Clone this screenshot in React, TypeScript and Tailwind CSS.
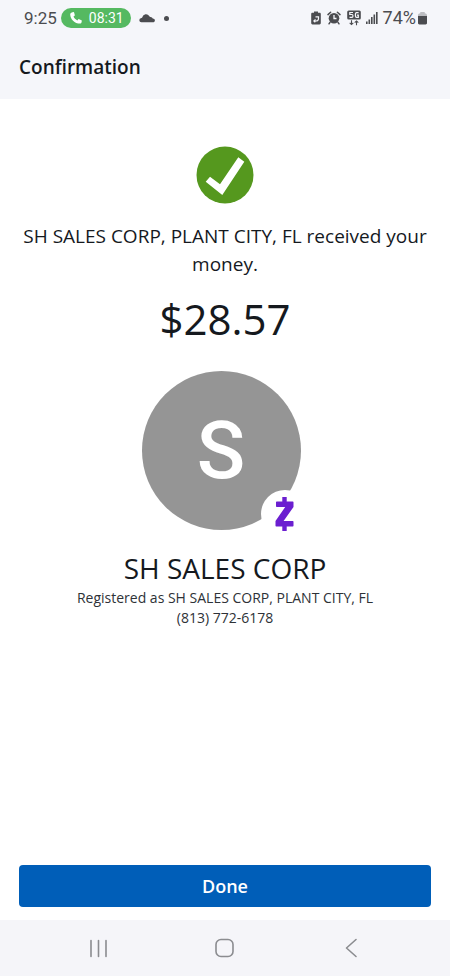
import type { ReactNode } from "react";

const payment = {
  name: "SH SALES CORP",
  location: "PLANT CITY, FL",
  amount: "$28.57",
  phone: "(813) 772-6178",
};

const recipient = `${payment.name}, ${payment.location}`;

function StatusBar() {
  return (
    <div className="flex h-9 items-center justify-between pl-6 pr-[23px] font-['Roboto',sans-serif] text-[#4b4c50]">
      <div className="flex items-center">
        <span className="text-[17px] leading-5">9:25</span>
        {/* Ongoing call */}
        <div className="ml-1 flex h-5 w-[70px] items-center gap-[7px] rounded-full bg-[#55b961] pl-[9px] text-white">
          <svg className="h-3 w-3" viewBox="0 0 12 12" fill="currentColor">
            <path d="M1.900.4 3.200.1c.5-.1.8.1.9.5l.7 2.300c.1.4 0 .7-.3.9l-1 .8c.7 1.700 2 3 3.800 3.800l.9-1c.3-.3.6-.4 1-.2l2.200 1c.4.2.5.5.4.9l-.4 1.700c-.1.5-.5.8-1 .8C4.700 11.700.2 7.200.2 2.200c0-.9.7-1.600 1.700-1.800Z" />
          </svg>
          <span className="text-sm leading-5">08:31</span>
        </div>
        <svg className="ml-2 h-[10px] w-4" viewBox="0 0 16 10" fill="currentColor">
          <path d="M2.600 9.300A2.200 2.200 0 0 1 2.400 4.900c.6-.1.8-.3 1-.9A3.700 3.700 0 0 1 10.200 3c.3.600.7.8 1.300.9 1.200.2 1.900.8 2.200 1.700 1.400.2 2.200.8 2.200 1.900 0 1.100-.8 1.800-2 1.800Z" />
        </svg>
        <span className="ml-[9px] h-[5px] w-[5px] rounded-full bg-[#4b4c50]" />
      </div>

      <div className="flex items-center">
        <svg className="h-[14px] w-[10px]" viewBox="0 0 10 14" fill="currentColor">
          <path d="M3 .5h4v1.300h1.500c.8 0 1.300.5 1.300 1.300v9c0 .8-.5 1.300-1.300 1.300h-7C.7 13.400.2 12.900.2 12.100v-9c0-.8.5-1.300 1.300-1.300H3Z" />
          <path d="M4.500 5.800h3v1.700c0 1.700-1 2.500-2.500 2.500H2.800M4.500 8.400 2.900 10l1.400 1.200" stroke="#f5f6fa" strokeWidth="1.200" fill="none" />
        </svg>
        <svg className="ml-[6px] h-[14px] w-[14px]" viewBox="0 0 14 14" fill="currentColor">
          <circle cx="7" cy="7.200" r="5.300" />
          <path d="m1 3.600 2.600-2.300M13 3.600l-2.600-2.300M3 11.300l-1 1.500M11 11.300l1 1.500" stroke="currentColor" strokeWidth="1.500" strokeLinecap="round" />
          <path d="M7 4v3.500h2.500" stroke="#f5f6fa" strokeWidth="1.300" fill="none" />
        </svg>
        <svg className="ml-[6px] h-4 w-[14px]" viewBox="0 0 14 16" fill="currentColor">
          <rect x=".2" y=".5" width="13.600" height="9" rx="1.500" />
          <path d="M6 2.500H2.800v2H5c1.300 0 1.300 2.800 0 2.800H2.500M11.600 2.600H9.500c-1.500 0-1.500 4.700 0 4.700h1.800V5.200H9.900" stroke="#f5f6fa" strokeWidth="1.200" fill="none" />
          <path d="M4.500 10.300v4.200M2.700 12.900l1.800 1.700 1.800-1.700M9.500 15.200V11M7.700 12.600l1.800-1.700 1.800 1.700" stroke="currentColor" strokeWidth="1.100" fill="none" />
        </svg>
        <svg className="ml-[5px] h-3 w-3" viewBox="0 0 12 12" fill="currentColor">
          <rect x="0" y="9.500" width="1.600" height="2.500" />
          <rect x="2.500" y="7.500" width="1.600" height="4.500" />
          <rect x="5" y="5" width="1.600" height="7" />
          <rect x="7.500" y="2.500" width="1.600" height="9.500" />
          <rect x="10" y="0" width="1.600" height="12" />
        </svg>
        <span className="ml-[5px] text-lg leading-5">74%</span>
        <svg className="ml-[2px] h-[14px] w-[9px]" viewBox="0 0 9 14" fill="currentColor">
          <path d="M2.300 1h4.400v1.200c1.300 0 2.300.8 2.300 2V5H0v-.8c0-1.200 1-2 2.300-2Z" fill="#bcbdc1" />
          <path d="M0 5h9v7c0 .8-.5 1.400-1.400 1.400H1.400C.5 13.400 0 12.800 0 12Z" />
        </svg>
      </div>
    </div>
  );
}

function Avatar({ letter }: { letter: string }) {
  return (
    <div className="relative mt-6 self-center pb-2 pr-2">
      <div className="flex h-[159px] w-[159px] items-center justify-center rounded-full bg-[#959595]">
        <span className="font-['Roboto',sans-serif] text-[80px] font-medium leading-none text-white">{letter}</span>
      </div>
      {/* Zelle badge */}
      <div className="absolute bottom-0 right-0 flex h-12 w-12 items-center justify-center rounded-full bg-white">
        <svg className="h-[34px] w-[19px]" viewBox="0 0 19 34" fill="#6b1fd0">
          <path d="M7.300 0h4.400v4.500h6.100c.4 0 .7.300.7.700v4.800L8.600 24h9.200c.4 0 .7.300.7.700v4.100c0 .4-.3.700-.7.700h-6.100V34H7.300v-4.500H1.200c-.4 0-.7-.3-.7-.7v-4.800L10.200 10H1.700C1.300 10 1 9.700 1 9.300V5.200c0-.4.3-.7.700-.7h5.600Z" />
        </svg>
      </div>
    </div>
  );
}

function NavButton({ label, children }: { label: string; children: ReactNode }) {
  return (
    <button type="button" aria-label={label} className="flex items-center justify-center">
      <svg
        className="h-5 w-5"
        viewBox="0 0 20 20"
        fill="none"
        stroke="#8b8c90"
        strokeWidth="1.600"
        strokeLinecap="round"
        strokeLinejoin="round"
      >
        {children}
      </svg>
    </button>
  );
}

export default function App() {
  return (
    <div className="flex min-h-screen flex-col bg-white font-['Open_Sans',sans-serif] text-[#15191e]">
      <header className="bg-[#f5f6fa] pb-[18px]">
        <StatusBar />
        <h1 className="mt-[17px] px-[19px] text-[19px] font-semibold leading-7">Confirmation</h1>
      </header>

      <main className="flex flex-1 flex-col px-[19px] pb-[13px] pt-[47px] text-center">
        <svg className="h-[58px] w-[58px] self-center" viewBox="0 0 58 58">
          <circle cx="29" cy="29" r="28.500" fill="#55981e" />
          <path d="m9.700 35.700 4.300-5 10 7.600 18.300-27 6 4.400L26.300 49Z" fill="#fff" />
        </svg>
        <p className="mt-[18px] text-[19px] leading-7">{`${recipient} received your money.`}</p>
        <p className="mt-[13px] text-[42px] leading-14">{payment.amount}</p>

        <Avatar letter={payment.name[0]} />

        <h2 className="mt-[10px] text-[28px] leading-10">{payment.name}</h2>
        <p className="text-sm leading-5 text-[#2e3237]">{`Registered as ${recipient}`}</p>
        <p className="text-sm leading-5 text-[#2e3237]">{payment.phone}</p>

        <button type="button" className="mt-auto h-[42px] rounded bg-[#005eb8] text-lg font-semibold text-white">
          Done
        </button>
      </main>

      {/* Android navigation */}
      <nav className="grid h-14 grid-cols-3 bg-[#f5f5f9] px-9">
        <NavButton label="Recent apps">
          <path d="M2 2.500v16M9.500 2.500v16M17 2.500v16" />
        </NavButton>
        <NavButton label="Home">
          <rect x="1" y="1.500" width="17" height="17" rx="5" />
        </NavButton>
        <NavButton label="Back">
          <path d="M15 1.500 5.500 10l9.500 8.500" />
        </NavButton>
      </nav>
    </div>
  );
}
